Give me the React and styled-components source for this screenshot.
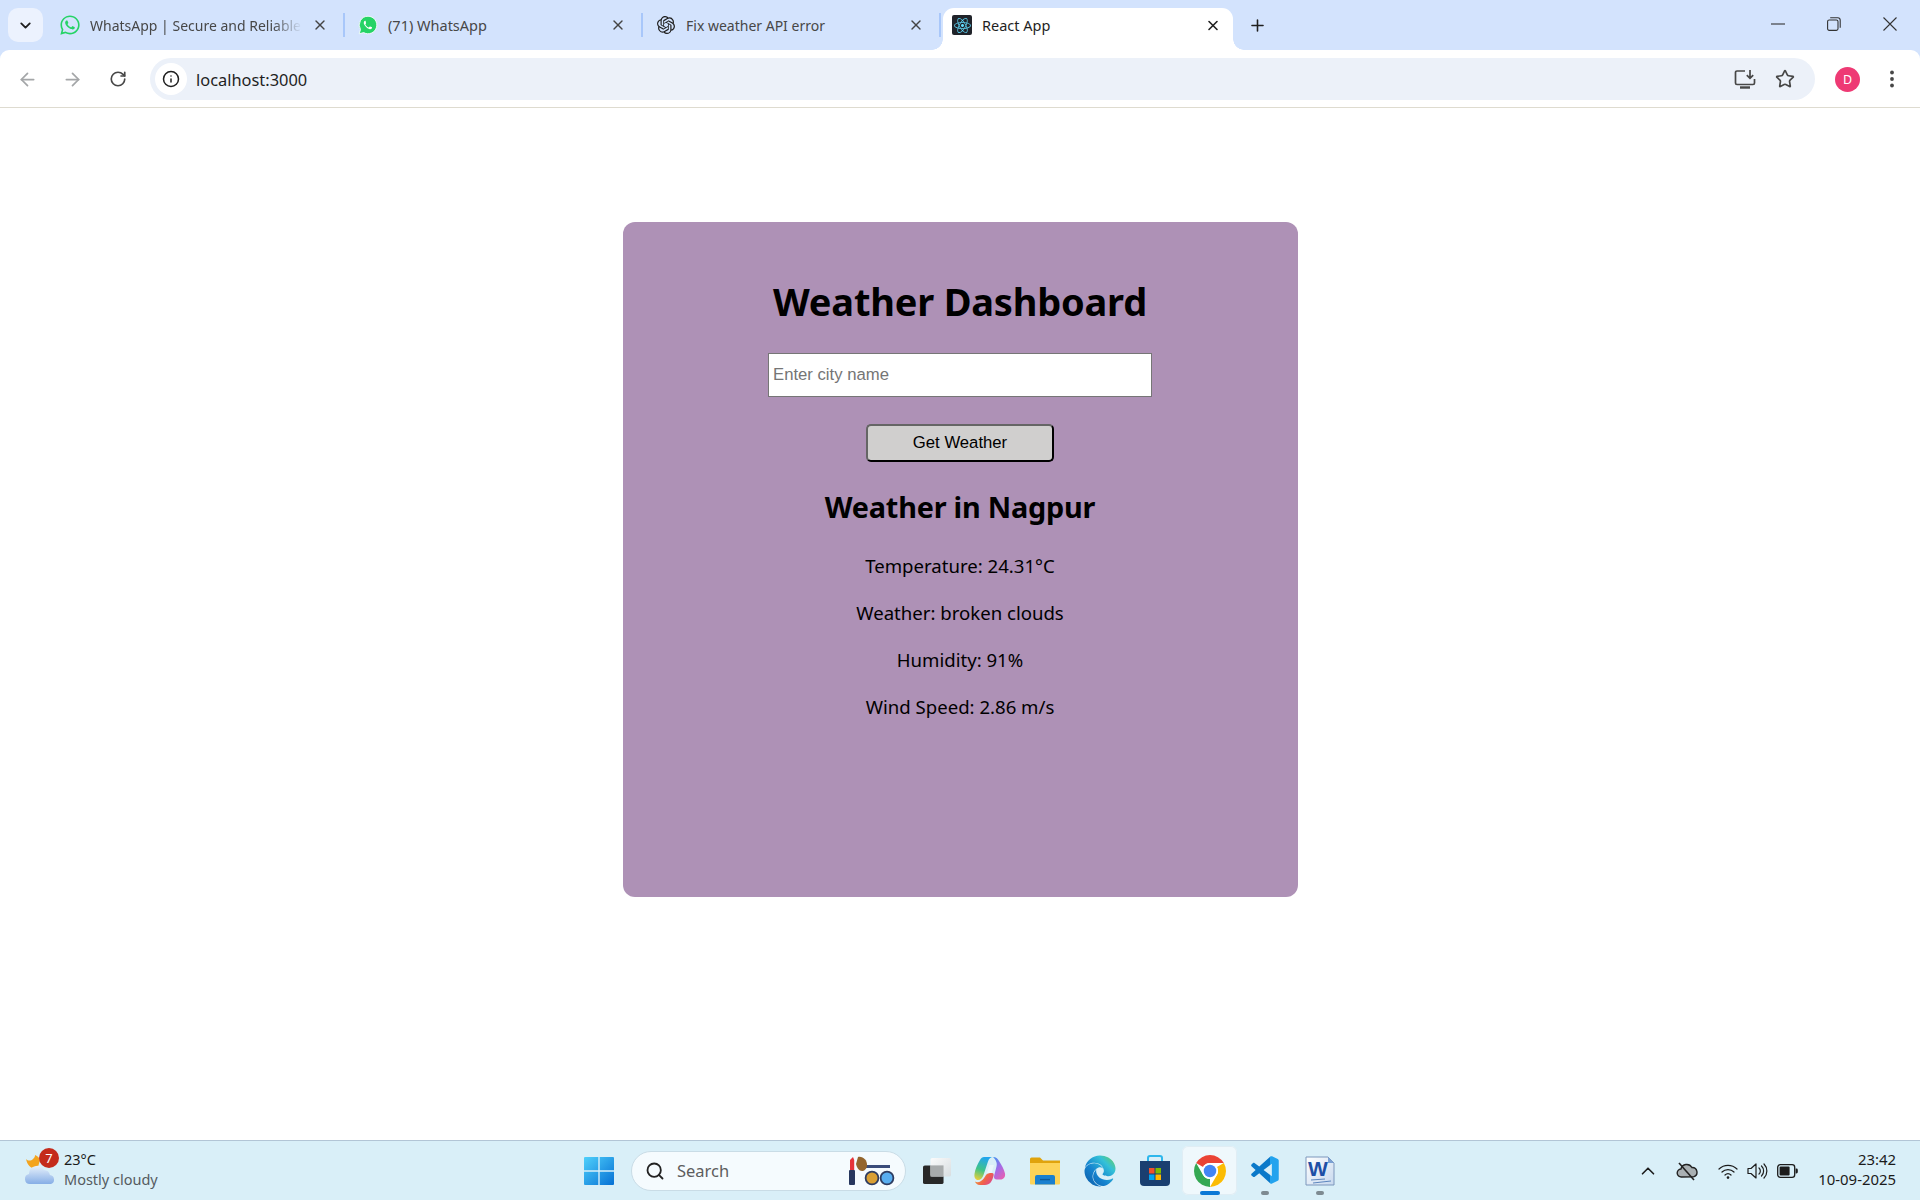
import React from "react";
import styled, { createGlobalStyle } from "styled-components";
import { ArrowLeft, ArrowRight, RotateCw, Info, Star, ChevronDown, ChevronUp, X, Plus, Search } from "lucide-react";
import { FaWhatsapp, FaReact, FaEdge } from "react-icons/fa";
import { SiOpenai } from "react-icons/si";
import { VscVscode } from "react-icons/vsc";

const UI = `"Noto Sans", "Open Sans", "Liberation Sans", sans-serif`;

const Global = createGlobalStyle`
  html, body { margin: 0; padding: 0; background: #fff; }
  * { box-sizing: border-box; }
  body { font-family: ${UI}; color: #000; }
`;

const Screen = styled.div`
  width: 1920px; height: 1200px; display: flex; flex-direction: column; overflow: hidden; background: #fff;
`;

/* ---------- tab strip ---------- */
const TabStrip = styled.div`
  height: 50px; background: #d3e3fd; display: flex; align-items: flex-end; padding-left: 8px; flex: none;
`;
const TabSearch = styled.button`
  width: 35px; height: 34px; margin: 0 5px 8px 0; border: 0; border-radius: 10px; background: #ecf2fe;
  display: flex; align-items: center; justify-content: center; padding: 0; color: #1f1f1f;
`;
const Tab = styled.div`
  position: relative; height: 42px; display: flex; align-items: center; flex: none;
  width: ${p => p.$width}px; padding: 0 ${p => p.$active ? 12 : 15}px 8px ${p => p.$active ? 9 : 12}px;
  gap: 10px; color: ${p => p.$active ? "#1f1f1f" : "#474747"}; font-size: 14.5px;
  background: ${p => p.$active ? "#fff" : "transparent"};
  border-radius: ${p => p.$active ? "11px 11px 0 0" : "0"};
  margin-right: ${p => p.$active ? 9 : 0}px;
  ${p => p.$active && `
    &::before, &::after { content: ""; position: absolute; bottom: 0; width: 11px; height: 11px; background: radial-gradient(circle at 0 0, #d3e3fd 10.5px, #fff 11px); }
    &::before { left: -11px; }
    &::after { right: -11px; transform: scaleX(-1); }
  `}
`;
const TabIcon = styled.span`
  width: 20px; height: 20px; flex: none; display: flex; align-items: center; justify-content: center;
  color: ${p => p.$color || "#1f1f1f"};
`;
const ReactFav = styled.span`
  width: 20px; height: 20px; flex: none; background: #20232a; border-radius: 2px; color: #61dafb;
  display: flex; align-items: center; justify-content: center;
`;
const TabTitle = styled.span`
  flex: 1; min-width: 0; white-space: nowrap; overflow: hidden;
  ${p => p.$tight && `font-size: 14px;`}
  ${p => p.$fade && `-webkit-mask-image: linear-gradient(90deg, #000 86%, transparent 100%); mask-image: linear-gradient(90deg, #000 86%, transparent 100%);`}
`;
const TabClose = styled.span`
  width: 16px; display: flex; justify-content: center; flex: none; color: ${p => p.$active ? "#1f1f1f" : "#444"};
`;
const TabSep = styled.span`
  width: 2px; height: 24px; margin: 0 ${p => p.$last ? 2 : 1}px 13px 0; background: #a8c7fa; flex: none;
`;
const NewTab = styled.span`
  width: 30px; height: 34px; margin-bottom: 8px; display: flex; align-items: center; justify-content: center; color: #1f1f1f; flex: none;
`;
const WindowControls = styled.div`
  margin-left: auto; display: flex; height: 50px; padding-right: 2px;
`;
const WinBtn = styled.span`
  width: 56px; height: 48px; display: flex; align-items: center; justify-content: center; color: #333;
`;

/* ---------- toolbar ---------- */
const ToolbarWrap = styled.div`background: #d3e3fd; flex: none;`;
const Toolbar = styled.div`
  height: 58px; background: #fff; display: flex; align-items: center; border-bottom: 1px solid #dedbd0;
  border-radius: 9px 9px 0 0; padding: 1px 0 0 0;
`;
const NavBtn = styled.span`
  width: 45px; flex: none; display: flex; justify-content: center; color: ${p => p.$dim ? "#a4a6a8" : "#474747"};
  &:first-child { margin-left: 5px; }
`;
const Omnibox = styled.div`
  width: 1665px; height: 42px; margin-left: 10px; border-radius: 21px; background: #ecf1f9; display: flex; align-items: center; flex: none; padding: 0 10px 0 5px;
`;
const InfoChip = styled.span`
  width: 32px; height: 32px; border-radius: 50%; background: #fff; color: #1f1f1f; display: flex; align-items: center; justify-content: center; flex: none;
`;
const Url = styled.span`
  margin-left: 9px; font-size: 16.4px; color: #1f1f1f; flex: 1;
`;
const OmniIcon = styled.span`
  width: 40px; display: flex; justify-content: center; color: #474747; flex: none;
`;
const Avatar = styled.span`
  width: 25px; height: 25px; border-radius: 50%; background: #ee3a74; color: #fff; font-size: 12.5px;
  display: flex; align-items: center; justify-content: center; flex: none; margin-left: 20px;
`;
const Kebab = styled.span`
  width: 44px; margin-left: 10px; display: flex; justify-content: center; color: #474747; flex: none;
`;

/* ---------- page ---------- */
const Page = styled.main`
  flex: 1; min-height: 0; padding-top: 114px; display: flex; justify-content: center; align-items: flex-start;
`;
const Card = styled.section`
  width: 675px; height: 675px; background: #ae91b6; border-radius: 12px; padding-top: 54px;
  display: flex; flex-direction: column; align-items: center; color: #000;
`;
const Title = styled.h1`
  margin: 0; font-size: 38px; line-height: 50px; font-weight: 700; letter-spacing: -.2px;
`;
const CityInput = styled.input`
  width: 384px; height: 44px; margin-top: 27px; border: 1px solid #767676; background: #fff; padding: 0 4px 1px;
  font: 16.7px "Liberation Sans", Arial, sans-serif; color: #000; border-radius: 0; outline: none;
  &::placeholder { color: #757575; opacity: 1; }
`;
const GetButton = styled.button`
  width: 188px; height: 38px; margin-top: 27px; background: #d0cfce; color: #000;
  border: 2px outset #111; border-radius: 5px; font: 16.7px "Liberation Sans", Arial, sans-serif; padding: 0;
`;
const Subtitle = styled.h2`
  margin: 25px 0 0; font-size: 28.8px; line-height: 40px; font-weight: 700; letter-spacing: -.2px;
`;
const Facts = styled.div`
  margin-top: 25px; display: flex; flex-direction: column; gap: 19px; align-items: center;
`;
const Fact = styled.p`
  margin: 0; font-size: 18.6px; line-height: 28px;
`;

/* ---------- taskbar ---------- */
const Taskbar = styled.footer`
  height: 60px; flex: none; border-top: 1px solid #b2c5d6; background: #d9eff8;
  display: grid; grid-template-columns: 572px auto 1fr; align-items: center; position: relative;
`;
const WeatherWidget = styled.div`
  display: flex; align-items: center; padding-left: 24px; gap: 7px;
`;
const WeatherIconWrap = styled.span`
  position: relative; width: 33px; height: 44px; display: block; flex: none;
`;
const Badge = styled.span`
  position: absolute; left: 15px; top: -1px; width: 20px; height: 20px; border-radius: 50%; background: #c42b1c; color: #fff;
  font-size: 13px; line-height: 20px; text-align: center;
`;
const WeatherText = styled.div`
  display: flex; flex-direction: column; font-size: 14.5px; line-height: 20.5px; margin-top: -3px;
`;
const Temp = styled.span`color: #1b1b1b;`;
const Cond = styled.span`color: #555b60;`;
const Center = styled.div`display: flex; align-items: center;`;
const StartBtn = styled.span`
  width: 54px; height: 48px; display: flex; align-items: center; justify-content: center; margin-right: 5px; flex: none;
`;
const SearchBox = styled.div`
  width: 275px; height: 40px; border-radius: 20px; background: #f5fbfe; border: 1px solid #c9dce6; display: flex; align-items: center;
  padding: 0 9px 0 13px; flex: none; margin-right: 1px;
`;
const SearchLabel = styled.span`
  font-size: 16.5px; color: #5d5d5d; margin-left: 12px; flex: 1;
`;
const AppBtn = styled.span`
  position: relative; width: 55px; height: 49px; display: flex; align-items: center; justify-content: center; flex: none;
  border-radius: 6px;
  ${p => p.$active && `background: #eff8fc; box-shadow: inset 0 0 0 1px #e0edf4;`}
`;
const RunDot = styled.span`
  position: absolute; bottom: 0; left: 50%; transform: translateX(-50%); height: 4px; border-radius: 2px;
  width: ${p => p.$active ? 20 : 8}px; background: ${p => p.$active ? "#0a78d6" : "#7e8a91"};
`;
const Tray = styled.div`
  display: flex; align-items: center; justify-content: flex-end; padding-right: 24px; color: #1c1c1c;
`;
const TrayIcon = styled.span`
  display: flex; justify-content: center; width: ${p => p.$w}px; flex: none;
`;
const Clock = styled.div`
  display: flex; flex-direction: column; align-items: flex-end; font-size: 14.9px; line-height: 20.5px; margin-left: 16px; margin-top: -3px; color: #1b1b1b;
`;
const WordW = styled.text`
  font-family: "Liberation Sans", sans-serif; font-weight: 700; font-size: 21px; fill: #1d4fa6;
`;
const TaskSvg = styled.svg`margin-left: 5px;`;
const EdgeGlyph = styled(FaEdge)`
  width: 32px; height: 32px; color: transparent;
  path { fill: url(#edgeFill); }
`;
const CodeGlyph = styled(VscVscode)`
  width: 34px; height: 34px; margin-left: 2px; color: transparent;
  path { fill: url(#codeFill); }
`;
const HiddenDefs = styled.svg`
  position: absolute; width: 0; height: 0;
`;

/* ---------- drawings ---------- */
const SharedDefs = () => (
  <HiddenDefs aria-hidden="true">
    <defs>
      <linearGradient id="edgeFill" x1="0" y1="1" x2="1" y2="0">
        <stop offset="0" stopColor="#0c59a4" />
        <stop offset=".4" stopColor="#1583cf" />
        <stop offset=".72" stopColor="#34c1d8" />
        <stop offset="1" stopColor="#6fd04e" />
      </linearGradient>
      <linearGradient id="codeFill" x1="0" y1="0" x2="1" y2="0">
        <stop offset=".7" stopColor="#0b79c9" />
        <stop offset=".7" stopColor="#23a3ee" />
      </linearGradient>
    </defs>
  </HiddenDefs>
);
const FilledWhatsapp = () => (
  <svg width="22" height="22" viewBox="0 0 24 24">
    <path d="M12 1.500a10.500 10.500 0 0 0-9 15.900L1.500 22.500l5.300-1.400A10.500 10.500 0 1 0 12 1.500z" fill="#25d366" stroke="#fff" strokeWidth="1" />
    <path d="M8.500 7c-.4 0-1 .3-1.300 1-.6 1.300-.3 3 1.500 5.300 1.800 2.300 3.600 3.500 5.500 3.900 1 .2 2-.3 2.500-1.300.2-.5.2-1 .1-1.100l-2.200-1.100c-.2-.1-.4 0-.5.1l-.8 1c-.2.2-.4.2-.6.1-1.700-.7-3-2-3.800-3.500-.1-.2-.1-.4.1-.5l.6-.8c.1-.2.1-.3 0-.5L9.200 7.300C9 7 8.800 7 8.500 7z" fill="#fff" />
  </svg>
);
const RestoreIcon = () => (
  <svg width="14" height="14" viewBox="0 0 14 14" fill="none" stroke="currentColor" strokeWidth="1.1">
    <rect x=".6" y="3" width="10.4" height="10.4" rx="1.6" />
    <path d="M3.2 .8h7.6a2.4 2.4 0 0 1 2.4 2.4v7.6" />
  </svg>
);
const MinIcon = () => <svg width="14" height="14" viewBox="0 0 14 14" stroke="currentColor" strokeWidth="1.1"><path d="M0 7h14" /></svg>;
const CloseIcon = () => <svg width="14" height="14" viewBox="0 0 14 14" stroke="currentColor" strokeWidth="1.1"><path d="M.5.5l13 13M13.500.5l-13 13" /></svg>;
const InstallIcon = () => (
  <svg width="22" height="22" viewBox="0 0 22 22" fill="none" stroke="currentColor" strokeWidth="1.7">
    <path d="M11 3H3a1.5 1.5 0 0 0-1.5 1.5V15A1.5 1.5 0 0 0 3 16.5h16a1.5 1.5 0 0 0 1.5-1.5v-4" />
    <path d="M16 2v8M12.8 7.2L16 10.4l3.2-3.2" />
    <path d="M6 19.5h10" strokeWidth="2.4" />
  </svg>
);
const KebabIcon = () => (
  <svg width="6" height="18" viewBox="0 0 6 18" fill="currentColor">
    <circle cx="3" cy="2.5" r="1.9" /><circle cx="3" cy="9" r="1.9" /><circle cx="3" cy="15.5" r="1.9" />
  </svg>
);
const WeatherIcon = () => (
  <svg width="33" height="44" viewBox="0 0 33 44">
    <defs>
      <linearGradient id="cl" x1="0" y1="0" x2="0" y2="1"><stop offset="0" stopColor="#e6f0fb" /><stop offset="1" stopColor="#86aee6" /></linearGradient>
    </defs>
    <path d="M2 10c2 2 5 2 7 0 2-2 2-3 2-4 2 1 4 2 5 5l-2 7c-4 3-10 1-12-8z" fill="#f3a41f" />
    <path d="M6 35a5 5 0 0 1-1-9.900 8 8 0 0 1 15-4 6.500 6.500 0 0 1 6 5 4.600 4.600 0 0 1 1 8.900z" fill="url(#cl)" />
  </svg>
);
const WinLogo = () => (
  <svg width="30" height="30" viewBox="0 0 30 30">
    <defs>
      <linearGradient id="w" x1="0" y1="0" x2="1" y2="1"><stop offset="0" stopColor="#4fd0fb" /><stop offset="1" stopColor="#0670d4" /></linearGradient>
    </defs>
    <path d="M1 1h13.300v13.300H0V2a1 1 0 0 1 1-1zM15.700 1H29a1 1 0 0 1 1 1v12.300H15.700zM0 15.700h14.300V29H1a1 1 0 0 1-1-1zM15.700 15.700H30V28a1 1 0 0 1-1 1H15.700z" fill="url(#w)" />
  </svg>
);
const Cosmetics = () => (
  <svg width="48" height="30" viewBox="0 0 48 30">
    <rect x="1" y="14" width="6" height="15" rx="1" fill="#27375e" />
    <path d="M2 14V4l3-3 1.200 3v10z" fill="#e6343a" />
    <path d="M15 9h27v3H15z" fill="#3a4c7a" />
    <path d="M10 1c5-1 9 3 9 8 0 4-3 6-5 6-3 0-5-3-6-7z" fill="#94652d" />
    <circle cx="24" cy="22" r="6.400" fill="#d99f33" stroke="#2e3c60" strokeWidth="1.800" />
    <circle cx="39" cy="22" r="6.400" fill="#58aef0" stroke="#2e3c60" strokeWidth="1.800" />
  </svg>
);
const TaskView = () => (
  <TaskSvg width="30" height="28" viewBox="0 0 32 30">
    <defs><linearGradient id="tv" x1="0" y1="0" x2="1" y2="1"><stop offset="0" stopColor="#fbfbfb" /><stop offset="1" stopColor="#d8dde0" /></linearGradient></defs>
    <rect x="1" y="9" width="22" height="20" rx="2" fill="#282828" />
    <rect x="9" y="1" width="22" height="20" rx="2" fill="url(#tv)" />
    <rect x="9" y="9" width="14" height="12" fill="#a8abac" />
  </TaskSvg>
);
const Copilot = () => (
  <svg width="32" height="30" viewBox="0 0 32 30">
    <defs>
      <linearGradient id="cA" x1=".5" y1="0" x2=".2" y2="1"><stop offset="0" stopColor="#22a5ee" /><stop offset=".55" stopColor="#3fc487" /><stop offset="1" stopColor="#e8cf3a" /></linearGradient>
      <linearGradient id="cB" x1=".2" y1="0" x2=".8" y2="1"><stop offset="0" stopColor="#4b8df0" /><stop offset=".5" stopColor="#a66be6" /><stop offset="1" stopColor="#e85fb0" /></linearGradient>
      <linearGradient id="cC" x1="0" y1=".3" x2="1" y2=".8"><stop offset="0" stopColor="#f0a53a" /><stop offset=".55" stopColor="#f0604a" /><stop offset="1" stopColor="#d8459b" /></linearGradient>
    </defs>
    <path d="M10 1h9c-2.500 0-4 1.500-5 4.500L9.500 19c-1 3-3 5-5.500 5C1.500 24 0 21.500.5 18 1.200 13 3.500 8 6 4c1-2 2.500-3 4-3z" fill="url(#cA)" />
    <path d="M19 1c3 0 4.500 1.500 6 4 2.500 4 5 8 6 12.500.6 3.500-1.500 6-4.500 6H23c-2.500 0-3.500-1.500-2.800-4l2.300-9c.8-3 0-6-3.500-9.500z" fill="url(#cB)" />
    <path d="M18 17c1.500 0 2 1 1.500 3-1.200 5-3.500 9-8.500 9H6c-3 0-4.500-2-5-3.500 1.500 1 4 1 6-.5 3-2 4-4.500 5-6 1-1.500 3-2 6-2z" fill="url(#cC)" />
    <path d="M15.500 9h4.500l-2.500 8h-4.500z" fill="#eaf6fb" />
  </svg>
);
const Folder = () => (
  <svg width="32" height="28" viewBox="0 0 32 28">
    <path d="M1 2a1.500 1.500 0 0 1 1.500-1.500H11l3 3h17v22H1z" fill="#e0a30c" />
    <path d="M1 6h30v20.500a1 1 0 0 1-1 1H2a1 1 0 0 1-1-1z" fill="#fdd357" />
    <path d="M6 27.500V20a2 2 0 0 1 2-2h16a2 2 0 0 1 2 2v7.500z" fill="#1a80cf" />
    <path d="M11 22.600h10" stroke="#0e5a9b" strokeWidth="1.400" />
  </svg>
);
const Store = () => (
  <svg width="30" height="32" viewBox="0 0 30 32">
    <path d="M8 7V3a2 2 0 0 1 2-2h10a2 2 0 0 1 2 2v4" fill="none" stroke="#2db7ec" strokeWidth="2" />
    <path d="M0 6h30v21a4 4 0 0 1-4 4H4a4 4 0 0 1-4-4z" fill="#1a3f70" />
    <rect x="9" y="13" width="5.500" height="5.500" fill="#f0502a" /><rect x="15.500" y="13" width="5.500" height="5.500" fill="#7fba00" />
    <rect x="9" y="19.500" width="5.500" height="5.500" fill="#00a4ef" /><rect x="15.500" y="19.500" width="5.500" height="5.500" fill="#ffb900" />
  </svg>
);
const ChromeLogo = () => {
  const seg = "M4.95 13A22 22 0 0 1 43.05 13H24A11 11 0 0 0 14.47 18.5Z";
  return (
    <svg width="32" height="32" viewBox="2 2 44 44">
      <circle cx="24" cy="24" r="22" fill="#fff" />
      <path d={seg} fill="#ea4335" />
      <path d={seg} fill="#fbbc04" transform="rotate(120 24 24)" />
      <path d={seg} fill="#34a853" transform="rotate(240 24 24)" />
      <circle cx="24" cy="24" r="11" fill="#fff" />
      <circle cx="24" cy="24" r="8.600" fill="#4285f4" />
    </svg>
  );
};
const Word = () => (
  <svg width="30" height="30" viewBox="0 0 30 30">
    <defs><linearGradient id="wd" x1="0" y1="0" x2="1" y2="1"><stop offset="0" stopColor="#fff" /><stop offset="1" stopColor="#c7d8ee" /></linearGradient></defs>
    <path d="M1 1h22l6 6v22H1z" fill="url(#wd)" stroke="#7d97bc" />
    <path d="M23 1v6h6z" fill="#7aa0d3" />
    <path d="M6 24l14-1M8 27l18-2" stroke="#5d86be" strokeWidth="1" />
    <WordW x="3" y="20">W</WordW>
  </svg>
);
const OffCloud = () => (
  <svg width="22" height="20" viewBox="0 0 22 20">
    <path d="M5.500 16a4 4 0 0 1-.6-8 6 6 0 0 1 11-1.500 4.800 4.800 0 0 1 1.600 9.400z" fill="#a9b0b3" stroke="#222" strokeWidth="1.400" />
    <path d="M3 2l15 17" stroke="#222" strokeWidth="1.600" />
  </svg>
);
const Wifi = () => (
  <svg width="20" height="18" viewBox="0 0 20 18" fill="none" stroke="#1c1c1c" strokeWidth="1.200" strokeLinecap="round">
    <path d="M1 7a13 13 0 0 1 18 0M4 10a8.600 8.600 0 0 1 12 0M7 13a4.400 4.400 0 0 1 6 0" />
    <circle cx="10" cy="15.600" r="1.300" fill="#1c1c1c" stroke="none" />
  </svg>
);
const Volume = () => (
  <svg width="21" height="18" viewBox="0 0 21 18" fill="none" stroke="#1c1c1c" strokeWidth="1.200" strokeLinecap="round">
    <path d="M1 6.500h3L9 2v14l-5-4.500H1z" strokeLinejoin="round" />
    <path d="M12 6a4 4 0 0 1 0 6M14.500 4a7 7 0 0 1 0 10M17 2a10 10 0 0 1 0 14" />
  </svg>
);
const Battery = () => (
  <svg width="21" height="14" viewBox="0 0 21 14">
    <rect x=".7" y=".7" width="17" height="12.600" rx="2.600" fill="none" stroke="#1c1c1c" strokeWidth="1.300" />
    <rect x="2.600" y="2.600" width="10" height="8.800" rx="1" fill="#1c1c1c" />
    <path d="M18.600 4.600h.8a1.400 1.400 0 0 1 1.400 1.400v2a1.400 1.400 0 0 1-1.400 1.400h-.8z" fill="#1c1c1c" />
  </svg>
);

const TABS = [
  { title: "WhatsApp | Secure and Reliable", fade: true, tight: true, width: 295, icon: <TabIcon $color="#25d366"><FaWhatsapp size={22} /></TabIcon> },
  { title: "(71) WhatsApp", width: 295, icon: <TabIcon><FilledWhatsapp /></TabIcon> },
  { title: "Fix weather API error", tight: true, width: 295, icon: <TabIcon><SiOpenai size={18} /></TabIcon>, last: true },
];
const FACTS = ["Temperature: 24.31°C", "Weather: broken clouds", "Humidity: 91%", "Wind Speed: 2.86 m/s"];
const APPS = [
  { key: "task", el: <TaskView /> },
  { key: "copilot", el: <Copilot /> },
  { key: "folder", el: <Folder /> },
  { key: "edge", el: <EdgeGlyph /> },
  { key: "store", el: <Store /> },
  { key: "chrome", el: <ChromeLogo />, active: true, dot: true },
  { key: "code", el: <CodeGlyph />, dot: true },
  { key: "word", el: <Word />, dot: true },
];

export default function App() {
  return (
    <Screen>
      <Global />
      <SharedDefs />
      <TabStrip>
        <TabSearch><ChevronDown size={17} strokeWidth={2.6} /></TabSearch>
        {TABS.map(t => (
          <React.Fragment key={t.title}>
            <Tab $width={t.width}>
              {t.icon}
              <TabTitle $fade={t.fade} $tight={t.tight}>{t.title}</TabTitle>
              <TabClose><X size={16} strokeWidth={2} /></TabClose>
            </Tab>
            <TabSep $last={t.last} />
          </React.Fragment>
        ))}
        <Tab $active $width={290}>
          <ReactFav><FaReact size={17} /></ReactFav>
          <TabTitle>React App</TabTitle>
          <TabClose $active><X size={17} strokeWidth={2.4} /></TabClose>
        </Tab>
        <NewTab><Plus size={19} strokeWidth={2} /></NewTab>
        <WindowControls>
          <WinBtn><MinIcon /></WinBtn>
          <WinBtn><RestoreIcon /></WinBtn>
          <WinBtn><CloseIcon /></WinBtn>
        </WindowControls>
      </TabStrip>
      <ToolbarWrap>
        <Toolbar>
          <NavBtn $dim><ArrowLeft size={21} strokeWidth={2} /></NavBtn>
          <NavBtn $dim><ArrowRight size={21} strokeWidth={2} /></NavBtn>
          <NavBtn><RotateCw size={18} strokeWidth={2.2} /></NavBtn>
          <Omnibox>
            <InfoChip><Info size={18} strokeWidth={2} /></InfoChip>
            <Url>localhost:3000</Url>
            <OmniIcon><InstallIcon /></OmniIcon>
            <OmniIcon><Star size={20} strokeWidth={2} /></OmniIcon>
          </Omnibox>
          <Avatar>D</Avatar>
          <Kebab><KebabIcon /></Kebab>
        </Toolbar>
      </ToolbarWrap>
      <Page>
        <Card>
          <Title>Weather Dashboard</Title>
          <CityInput placeholder="Enter city name" />
          <GetButton>Get Weather</GetButton>
          <Subtitle>Weather in Nagpur</Subtitle>
          <Facts>
            {FACTS.map(f => <Fact key={f}>{f}</Fact>)}
          </Facts>
        </Card>
      </Page>
      <Taskbar>
        <WeatherWidget>
          <WeatherIconWrap><WeatherIcon /><Badge>7</Badge></WeatherIconWrap>
          <WeatherText>
            <Temp>23°C</Temp>
            <Cond>Mostly cloudy</Cond>
          </WeatherText>
        </WeatherWidget>
        <Center>
          <StartBtn><WinLogo /></StartBtn>
          <SearchBox>
            <Search size={20} strokeWidth={2.2} color="#222" />
            <SearchLabel>Search</SearchLabel>
            <Cosmetics />
          </SearchBox>
          {APPS.map(a => (
            <AppBtn key={a.key} $active={a.active}>
              {a.el}
              {a.dot && <RunDot $active={a.active} />}
            </AppBtn>
          ))}
        </Center>
        <Tray>
          <TrayIcon $w={24}><ChevronUp size={22} strokeWidth={1.8} /></TrayIcon>
          <TrayIcon $w={54}><OffCloud /></TrayIcon>
          <TrayIcon $w={28}><Wifi /></TrayIcon>
          <TrayIcon $w={30}><Volume /></TrayIcon>
          <TrayIcon $w={30}><Battery /></TrayIcon>
          <Clock><span>23:42</span><span>10-09-2025</span></Clock>
        </Tray>
      </Taskbar>
    </Screen>
  );
}
